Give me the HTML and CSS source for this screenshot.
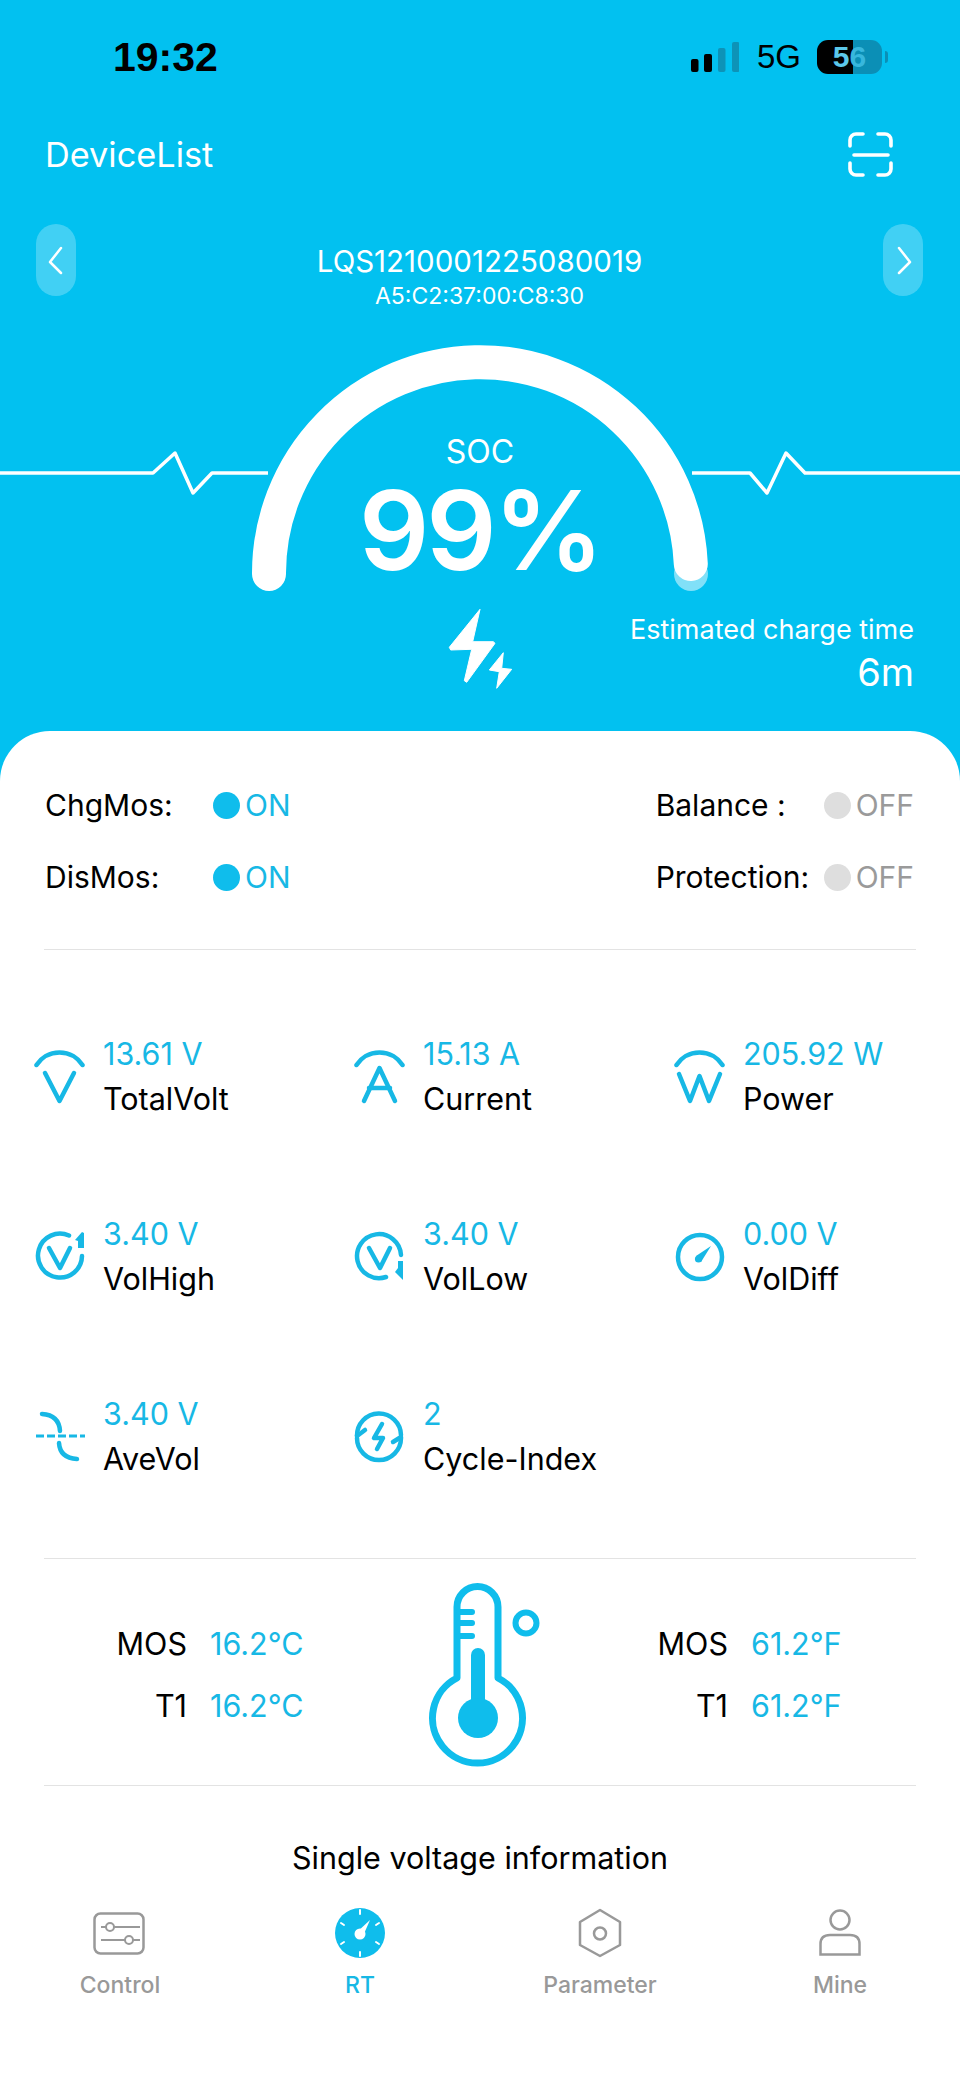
FILE: index.html
```html
<!DOCTYPE html>
<html lang="en">
<head>
  <meta charset="UTF-8">
  <title>RT</title>
  <meta name="viewport" content="width=device-width, initial-scale=1.0">
  <link rel="stylesheet" href="styles.css">
</head>

<body>
  <div class="app">
    <div class="hero">
      <!-- Status bar -->
      <div class="status-bar">
        <div class="time">19:32</div>
        <div class="status-right">
          <svg class="signal" width="48" height="30" viewBox="0 0 48 30">
            <rect x="0" y="17" width="7.5" height="13" rx="2" fill="#000"/>
            <rect x="13" y="12" width="8" height="18" rx="2" fill="#000"/>
            <rect x="27" y="6" width="7.5" height="24" rx="2" fill="#0d93b8"/>
            <rect x="41" y="0" width="7.5" height="30" rx="2" fill="#0d93b8"/>
          </svg>
          <span class="net">5G</span>
          <div class="battery"><span class="bat-a">5</span><span class="bat-b">6</span></div>
          <div class="battery-tip"></div>
        </div>
      </div>

      <!-- Top bar -->
      <div class="top-bar">
        <div class="device-list">DeviceList</div>
        <svg class="scan" width="45" height="45" viewBox="0 0 45 45" fill="none" stroke="#fff" stroke-width="3.6" stroke-linecap="round">
          <path d="M2 14V8a6 6 0 0 1 6-6h7"/>
          <path d="M30 2h7a6 6 0 0 1 6 6v6"/>
          <path d="M43 31v6a6 6 0 0 1-6 6h-7"/>
          <path d="M15 43H8a6 6 0 0 1-6-6v-6"/>
          <path d="M6 23H40"/>
        </svg>
      </div>

      <!-- Device switcher -->
      <div class="device-row">
        <div class="arrow-btn">
          <svg width="40" height="72" viewBox="0 0 40 72" fill="none" stroke="#fff" stroke-width="2.5" stroke-linecap="round" stroke-linejoin="round"><path d="M25 24L14 38L25 49"/></svg>
        </div>
        <div class="device-info">
          <div class="device-name">LQS1210001225080019</div>
          <div class="device-mac">A5:C2:37:00:C8:30</div>
        </div>
        <div class="arrow-btn">
          <svg width="40" height="72" viewBox="0 0 40 72" fill="none" stroke="#fff" stroke-width="2.5" stroke-linecap="round" stroke-linejoin="round"><path d="M16 24L27 38L16 49"/></svg>
        </div>
      </div>

      <!-- SOC gauge -->
      <div class="gauge">
        <svg class="gauge-art" width="960" height="260" viewBox="0 0 960 260" fill="none">
          <path d="M0 133H153L175 113L193 153L212 133H268" stroke="#fff" stroke-width="3.5" stroke-linejoin="round"/>
          <path d="M692 133H750L767 153L786 113L805 133H960" stroke="#fff" stroke-width="3.5" stroke-linejoin="round"/>
          <circle cx="691" cy="234" r="17" fill="#fff" fill-opacity="0.5"/>
          <path d="M269 234A211 211 0 0 1 690.8 224" stroke="#fff" stroke-width="34" stroke-linecap="round"/>
        </svg>
        <div class="gauge-text">
          <div class="soc-label">SOC</div>
          <div class="soc-value">99%</div>
        </div>
      </div>

      <div class="charge">
        <div></div>
        <svg width="70" height="90" viewBox="0 0 70 90" fill="#fff" stroke="#fff" stroke-width="1" stroke-linejoin="round">
          <path d="M35 5.3L4.3 43.3L5.7 46L26.7 45.3L19.3 76.7L21.7 78.3L50 39.3L48.3 37.7L27.7 37.7Z"/>
          <path d="M58.3 48.7L44.3 66L54.3 67.7L51.7 84.3L66.7 65.3L56.7 64.3Z"/>
        </svg>
        <div class="charge-time">
          <div class="charge-label">Estimated charge time</div>
          <div class="charge-value">6m</div>
        </div>
      </div>
    </div>

    <div class="panel">
      <!-- Mos / balance state -->
      <div class="switches">
        <div class="sw"><span class="sw-name">ChgMos:</span><span class="dot on"></span><span class="sw-state on">ON</span></div>
        <div class="sw"><span class="sw-name">Balance :</span><span class="dot"></span><span class="sw-state">OFF</span></div>
        <div class="sw"><span class="sw-name">DisMos:</span><span class="dot on"></span><span class="sw-state on">ON</span></div>
        <div class="sw"><span class="sw-name">Protection:</span><span class="dot"></span><span class="sw-state">OFF</span></div>
      </div>

      <div class="divider"></div>

      <!-- Readings -->
      <div class="readings">
        <div class="reading">
          <svg class="r-icon" width="52" height="56" viewBox="0 0 52 56">
            <path d="M3.5 15A27.4 27.4 0 0 1 49.5 15"/>
            <path d="M12 23L26.5 51L41 23"/>
          </svg>
          <div><div class="r-value">13.61 V</div><div class="r-label">TotalVolt</div></div>
        </div>
        <div class="reading">
          <svg class="r-icon" width="52" height="56" viewBox="0 0 52 56">
            <path d="M3.5 15A27.4 27.4 0 0 1 49.5 15"/>
            <path d="M11 51L26.5 18L42 51"/>
            <path d="M16 38H37"/>
          </svg>
          <div><div class="r-value">15.13 A</div><div class="r-label">Current</div></div>
        </div>
        <div class="reading">
          <svg class="r-icon" width="52" height="56" viewBox="0 0 52 56">
            <path d="M3.5 15A27.4 27.4 0 0 1 49.5 15"/>
            <path d="M6 24L17 51L26.5 26L36 51L47 24"/>
          </svg>
          <div><div class="r-value">205.92 W</div><div class="r-label">Power</div></div>
        </div>

        <div class="reading">
          <svg class="r-icon" width="52" height="56" viewBox="0 0 52 56">
            <path d="M36 5.5A22 22 0 1 0 49 26"/>
            <path class="solid" d="M49 2L42 10L45 11L45 18L51 18L51 3Z"/>
            <path d="M16 18L27 38L37 18"/>
          </svg>
          <div><div class="r-value">3.40 V</div><div class="r-label">VolHigh</div></div>
        </div>
        <div class="reading">
          <svg class="r-icon" width="52" height="56" viewBox="0 0 52 56">
            <path d="M48 25A22 22 0 1 0 33 47"/>
            <path class="solid" d="M50 31L45 31L45 38L42 42L50 50Z"/>
            <path d="M16 18L27 38L37 18"/>
          </svg>
          <div><div class="r-value">3.40 V</div><div class="r-label">VolLow</div></div>
        </div>
        <div class="reading">
          <svg class="r-icon" width="52" height="56" viewBox="0 0 52 56">
            <circle cx="27" cy="27" r="22"/>
            <path class="solid" d="M38 16L23 26L28 32Z"/>
            <circle class="solid" cx="25.5" cy="29" r="3.6"/>
          </svg>
          <div><div class="r-value">0.00 V</div><div class="r-label">VolDiff</div></div>
        </div>

        <div class="reading">
          <svg class="r-icon" width="52" height="56" viewBox="0 0 52 56">
            <path d="M9 4Q26 5 27 21"/>
            <path d="M26 33Q27 48 44 49"/>
            <path class="dash" d="M3 26H52"/>
          </svg>
          <div><div class="r-value">3.40 V</div><div class="r-label">AveVol</div></div>
        </div>
        <div class="reading">
          <svg class="r-icon" width="52" height="56" viewBox="0 0 52 56">
            <path d="M4 26A22 22 0 0 1 48 25"/>
            <path d="M48 28A22 22 0 0 1 4 28"/>
            <path d="M4 26L12 20"/>
            <path d="M48 27L40 32"/>
            <path d="M29 14L21 28H30L24 39"/>
          </svg>
          <div><div class="r-value">2</div><div class="r-label">Cycle-Index</div></div>
        </div>
      </div>

      <div class="divider divider-temps"></div>

      <!-- Temperatures -->
      <div class="temps">
        <div class="temp-list temp-left">
          <span class="t-name">MOS</span><span class="t-value">16.2°C</span>
          <span class="t-name">T1</span><span class="t-value">16.2°C</span>
        </div>
        <svg class="thermo" width="120" height="200" viewBox="0 0 120 200" fill="none" stroke="#0fbdec">
          <path stroke-width="7" stroke-linejoin="round" d="M36 106V35a20.5 20.5 0 0 1 41 0V106A45 45 0 1 1 36 106Z"/>
          <path stroke-width="6" stroke-linecap="round" d="M38 40H51M38 51H51M38 64H51"/>
          <path stroke-width="14" stroke-linecap="round" d="M57 83V146"/>
          <circle cx="57" cy="146" r="20" fill="#0fbdec" stroke="none"/>
          <circle cx="105" cy="51" r="10.5" stroke-width="6"/>
        </svg>
        <div class="temp-list temp-right">
          <span class="t-name">MOS</span><span class="t-value">61.2°F</span>
          <span class="t-name">T1</span><span class="t-value">61.2°F</span>
        </div>
      </div>

      <div class="divider divider-flat"></div>

      <div class="single-title">Single voltage information</div>

      <!-- Tabs -->
      <div class="tabbar">
        <div class="tab">
          <svg width="60" height="50" viewBox="0 0 60 50" fill="none" stroke="#999" stroke-width="2.5">
            <rect x="4.5" y="5.5" width="49" height="40" rx="6"/>
            <path stroke-width="2" d="M11 19H50M11 32H50"/>
            <circle cx="20" cy="19" r="4" fill="#fff" stroke-width="2"/>
            <circle cx="39" cy="32" r="4" fill="#fff" stroke-width="2"/>
          </svg>
          <div class="tab-label">Control</div>
        </div>
        <div class="tab active">
          <svg width="60" height="50" viewBox="0 0 60 50">
            <circle cx="30" cy="25" r="25" fill="#0fbdec"/>
            <path stroke="#fff" stroke-width="2" stroke-linecap="round" fill="none" d="M30 2V6M30 44V48M11 15L14 17M49 15L46 17M11 36L14 34M49 36L46 34"/>
            <path fill="#fff" d="M40 12L33 28L26 25Z"/>
            <circle cx="30" cy="26" r="5.5" fill="#fff"/>
          </svg>
          <div class="tab-label">RT</div>
        </div>
        <div class="tab">
          <svg width="60" height="50" viewBox="0 0 60 50" fill="none" stroke="#999" stroke-width="2.5" stroke-linejoin="round">
            <path d="M30 2L50 14V37L30 48L10 37V14Z"/>
            <circle cx="30" cy="25.5" r="6"/>
          </svg>
          <div class="tab-label">Parameter</div>
        </div>
        <div class="tab">
          <svg width="60" height="50" viewBox="0 0 60 50" fill="none" stroke="#999" stroke-width="2.5">
            <circle cx="30" cy="12" r="9.5"/>
            <path d="M10.5 46.5V36Q10.5 27 20 27H40Q49.5 27 49.5 36V46.5Z"/>
          </svg>
          <div class="tab-label">Mine</div>
        </div>
      </div>
    </div>
  </div>
</body>
</html>
```

FILE: styles.css
```css
html, body {
  margin: 0;
  padding: 0;
  height: 100%;
  font-family: 'Inter', 'Liberation Sans', sans-serif;
  overflow: hidden;
  background-color: #02c1f0;
}

.app {
  display: flex;
  flex-direction: column;
  width: 960px;
  height: 2077px;
}

/* Blue top part */
.hero {
  height: 731px;
  flex: none;
  color: #fff;
}

.status-bar {
  display: flex;
  justify-content: space-between;
  align-items: center;
  height: 114px;
  padding: 0 72px 0 113px;
  color: #000;
}

.time {
  font-family: 'Liberation Sans', sans-serif;
  font-size: 41px;
  font-weight: bold;
}

.status-right {
  display: flex;
  align-items: center;
}

.net {
  font-family: 'Liberation Sans', sans-serif;
  font-size: 33px;
  margin: 0 16px 0 18px;
}

.battery {
  display: flex;
  justify-content: center;
  width: 65px;
  height: 34px;
  border-radius: 11px;
  background: linear-gradient(90deg, #000 55%, #0b8fb6 55%);
  font-family: 'Liberation Sans', sans-serif;
  font-size: 30px;
  font-weight: bold;
  line-height: 34px;
}

.bat-a { color: #5cc8ea; }
.bat-b { color: #37b7dd; }

.battery-tip {
  width: 3px;
  height: 12px;
  margin-left: 3px;
  border-radius: 0 3px 3px 0;
  background: #0b8fb6;
}

.top-bar {
  display: flex;
  justify-content: space-between;
  align-items: center;
  height: 45px;
  margin-top: 18px;
  padding: 0 67px 0 45px;
}

.device-list {
  font-size: 34.3px;
}

.device-row {
  display: flex;
  justify-content: space-between;
  align-items: flex-start;
  height: 72px;
  margin-top: 47px;
  padding: 0 37px 0 36px;
}

.arrow-btn {
  width: 40px;
  height: 72px;
  border-radius: 20px;
  background: rgba(255, 255, 255, 0.25);
}

.device-info {
  text-align: center;
  padding-top: 17px;
}

.device-name {
  font-size: 29.5px;
  line-height: 40px;
}

.device-mac {
  font-size: 23px;
  line-height: 30px;
}

.gauge {
  position: relative;
  height: 260px;
  margin-top: 44px;
}

.gauge-art {
  display: block;
}

.gauge-text {
  position: absolute;
  left: 0;
  right: 0;
  top: 92px;
  text-align: center;
}

.soc-label {
  font-size: 32px;
  line-height: 40px;
}

.soc-value {
  font-size: 110px;
  font-weight: 600;
  line-height: 110px;
  letter-spacing: -3px;
  margin-top: 3px;
}

.charge {
  display: grid;
  grid-template-columns: 1fr 70px 1fr;
  padding-top: 4px;
}

.charge-time {
  text-align: right;
  padding: 6px 46px 0 0;
}

.charge-label {
  font-size: 27px;
  line-height: 40px;
}

.charge-value {
  font-size: 38px;
  line-height: 44px;
}

/* White sheet */
.panel {
  flex: 1;
  background: #fff;
  border-radius: 50px 50px 0 0;
  color: #000;
}

.switches {
  display: grid;
  grid-template-columns: auto auto;
  justify-content: space-between;
  row-gap: 36px;
  padding: 56px 46px 0 45px;
}

.sw {
  display: flex;
  align-items: center;
  height: 36px;
  font-size: 30px;
}

.sw-name {
  width: 168px;
}

.dot {
  width: 27px;
  height: 27px;
  border-radius: 50%;
  background: #dedede;
  margin-right: 5px;
}

.dot.on {
  background: #0fbdec;
}

.sw-state {
  color: #9a9a9a;
}

.sw-state.on {
  color: #17b8e5;
}

.divider {
  height: 1px;
  margin: 54px 44px 0;
  background: #e3e3e3;
}

.divider-flat {
  margin-top: 0;
}

.readings {
  display: grid;
  grid-template-columns: repeat(3, 320px);
  grid-auto-rows: 88px;
  row-gap: 92px;
  padding: 82px 0 0 33px;
}

.reading {
  display: flex;
  gap: 18px;
}

.r-icon {
  flex: none;
  margin-top: 18px;
  fill: none;
  stroke: #17b8e5;
  stroke-width: 4.5;
  stroke-linecap: round;
  stroke-linejoin: round;
}

.r-icon .solid {
  fill: #17b8e5;
  stroke: none;
}

.r-icon .dash {
  stroke-width: 3;
  stroke-linecap: butt;
  stroke-dasharray: 8 3;
}

.r-value {
  color: #17b8e5;
  font-size: 30.5px;
  line-height: 44px;
}

.r-label {
  font-size: 30.5px;
  line-height: 46px;
}

.divider-temps {
  margin-top: 78px;
}

.temps {
  display: flex;
  height: 226px;
  margin: 0 44px;
}

.temp-list {
  display: grid;
  column-gap: 23px;
  grid-auto-rows: 40px;
  row-gap: 22px;
  padding-top: 65px;
  font-size: 30.5px;
  line-height: 40px;
}

.temp-left {
  grid-template-columns: 143px 211px;
}

.temp-right {
  grid-template-columns: 187px 1fr;
}

.t-name {
  text-align: right;
}

.t-value {
  color: #17b8e5;
}

.thermo {
  flex: none;
  margin-top: 13px;
}

.single-title {
  text-align: center;
  font-size: 30.5px;
  line-height: 40px;
  margin-top: 52px;
}

.tabbar {
  display: flex;
  padding-top: 30px;
}

.tab {
  flex: 1;
  display: flex;
  flex-direction: column;
  align-items: center;
  color: #999;
}

.tab.active {
  color: #17b8e5;
}

.tab-label {
  font-size: 23px;
  font-weight: 500;
  line-height: 30px;
  margin-top: 12px;
}
```
